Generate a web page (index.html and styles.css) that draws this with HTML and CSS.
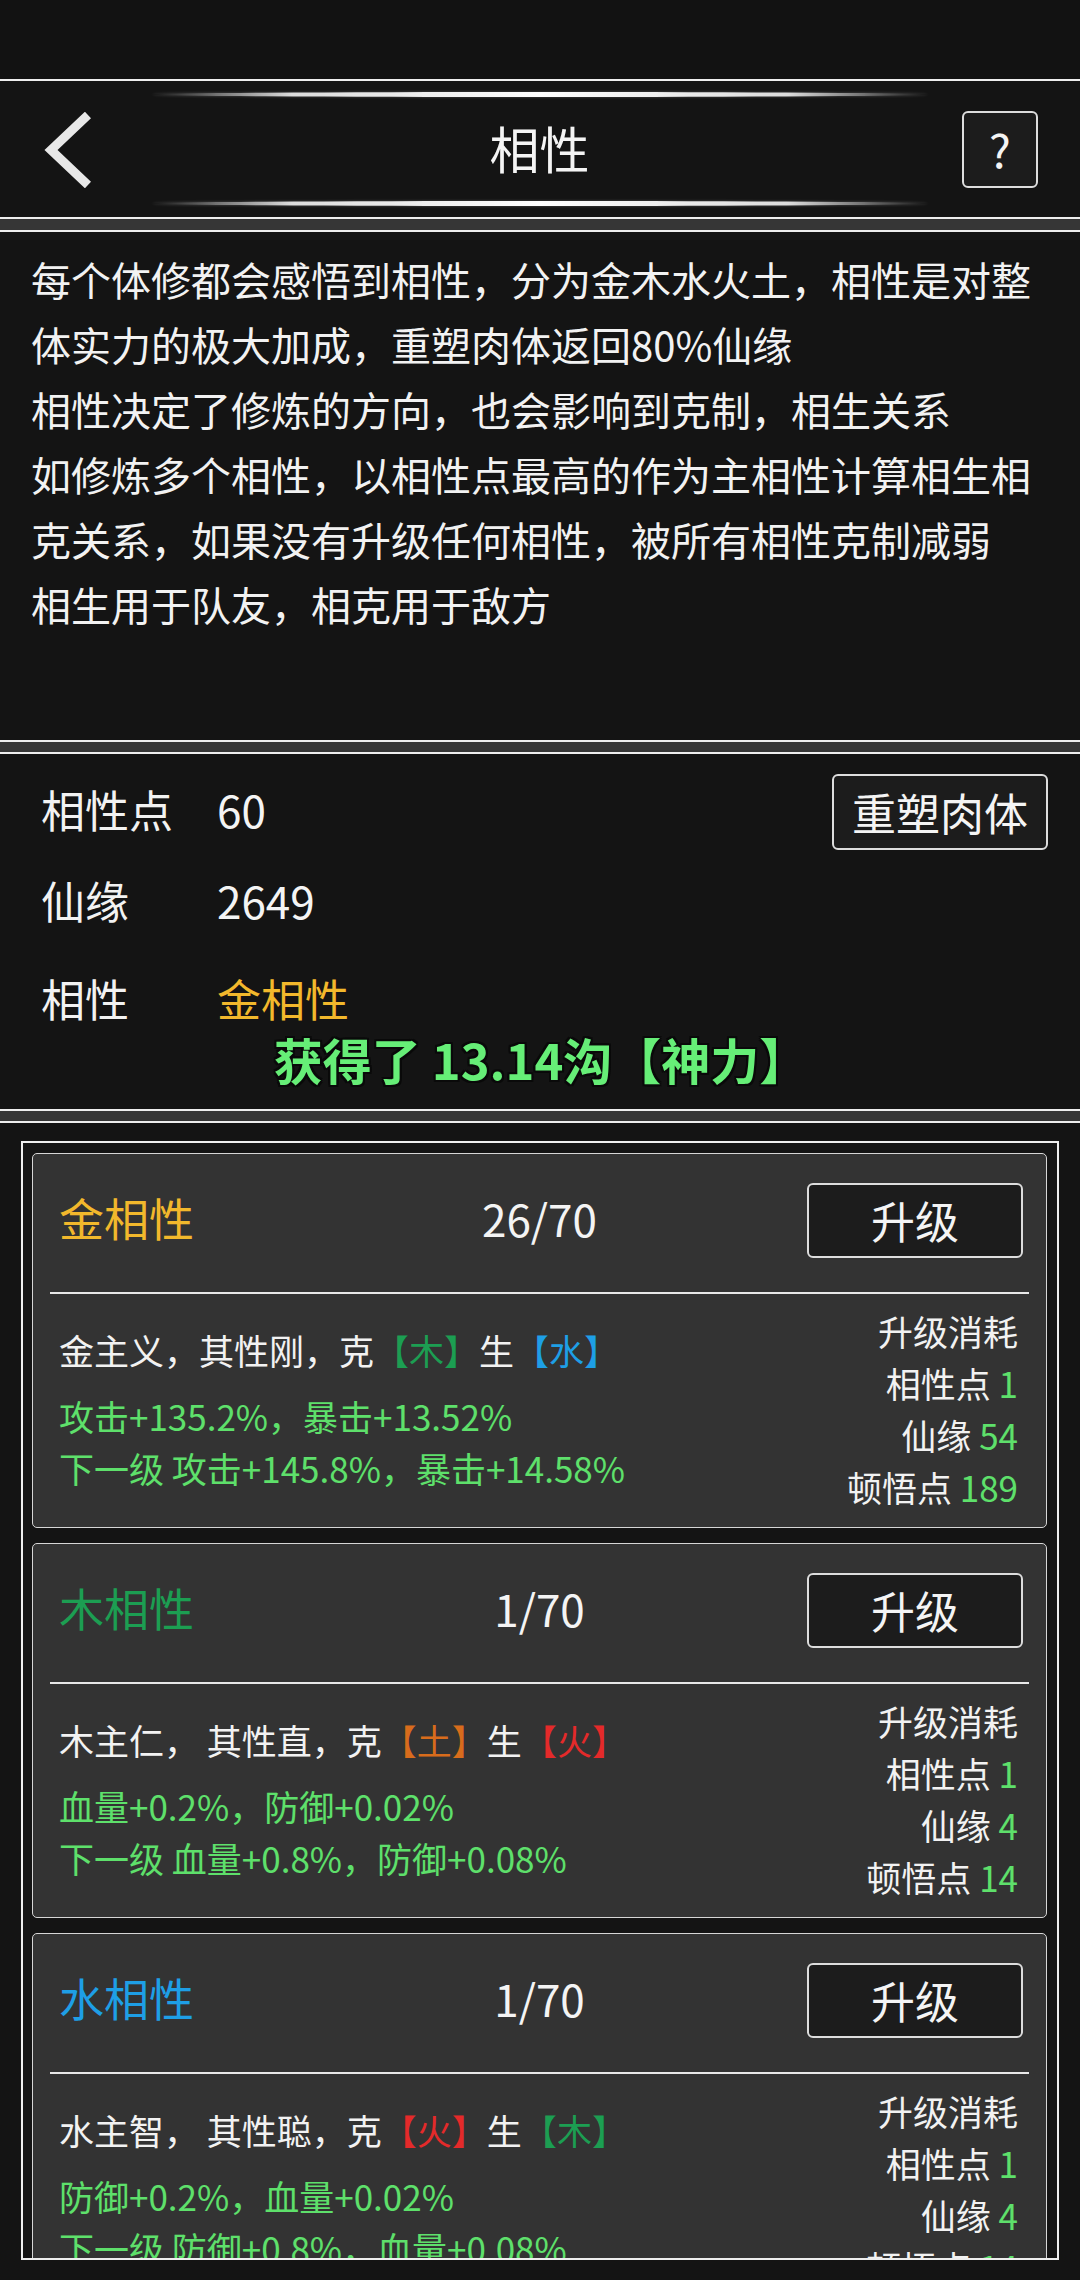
FILE: index.html
```html
<!DOCTYPE html>
<html lang="zh-CN">
<head>
<meta charset="utf-8">
<title>相性</title>
<link rel="stylesheet" href="styles.css">
</head>
<body>
<div class="status"></div>

<header class="topbar">
  <div class="glow"></div>
  <div class="bar-row">
    <svg class="back" width="50" height="76" viewBox="0 0 50 76">
      <polyline points="47,3 10,38 47,73" fill="none" stroke="#e8e8e8" stroke-width="9" stroke-linejoin="miter"/>
    </svg>
    <div class="title">相性</div>
    <div class="help">?</div>
  </div>
  <div class="glow"></div>
</header>

<div class="gap first-gap"></div>

<section class="panel desc">
  <p>每个体修都会感悟到相性，分为金木水火土，相性是对整体实力的极大加成，重塑肉体返回80%仙缘</p>
  <p>相性决定了修炼的方向，也会影响到克制，相生关系</p>
  <p>如修炼多个相性，以相性点最高的作为主相性计算相生相克关系，如果没有升级任何相性，被所有相性克制减弱</p>
  <p>相生用于队友，相克用于敌方</p>
</section>

<div class="gap"></div>

<section class="panel stats">
  <div class="stat-row first">
    <span class="label">相性点</span>
    <span class="value">60</span>
    <button class="btn reset">重塑肉体</button>
  </div>
  <div class="stat-row second">
    <span class="label">仙缘</span>
    <span class="value">2649</span>
  </div>
  <div class="stat-row third">
    <span class="label">相性</span>
    <span class="value gold">金相性</span>
  </div>
  <div class="toast">获得了 13.14沟【神力】</div>
</section>

<div class="gap"></div>

<section class="panel list">
  <div class="frame">
    <div class="card">
      <div class="card-head">
        <span class="card-title gold">金相性</span>
        <span class="progress">26/70</span>
        <button class="btn up">升级</button>
      </div>
      <div class="divider"></div>
      <div class="card-body">
        <div class="info">
          <div class="line main">金主义，其性刚，克<span class="wood">【木】</span>生<span class="water">【水】</span></div>
          <div class="line green">攻击+135.2%，暴击+13.52%</div>
          <div class="line green">下一级 攻击+145.8%，暴击+14.58%</div>
        </div>
        <div class="cost">
          <div class="line">升级消耗</div>
          <div class="line">相性点 <span class="green">1</span></div>
          <div class="line">仙缘 <span class="green">54</span></div>
          <div class="line">顿悟点 <span class="green">189</span></div>
        </div>
      </div>
    </div>

    <div class="card">
      <div class="card-head">
        <span class="card-title wood">木相性</span>
        <span class="progress">1/70</span>
        <button class="btn up">升级</button>
      </div>
      <div class="divider"></div>
      <div class="card-body">
        <div class="info">
          <div class="line main">木主仁， 其性直，克<span class="earth">【土】</span>生<span class="fire">【火】</span></div>
          <div class="line green">血量+0.2%，防御+0.02%</div>
          <div class="line green">下一级 血量+0.8%，防御+0.08%</div>
        </div>
        <div class="cost">
          <div class="line">升级消耗</div>
          <div class="line">相性点 <span class="green">1</span></div>
          <div class="line">仙缘 <span class="green">4</span></div>
          <div class="line">顿悟点 <span class="green">14</span></div>
        </div>
      </div>
    </div>

    <div class="card">
      <div class="card-head">
        <span class="card-title water">水相性</span>
        <span class="progress">1/70</span>
        <button class="btn up">升级</button>
      </div>
      <div class="divider"></div>
      <div class="card-body">
        <div class="info">
          <div class="line main">水主智， 其性聪，克<span class="fire">【火】</span>生<span class="wood">【木】</span></div>
          <div class="line green">防御+0.2%，血量+0.02%</div>
          <div class="line green">下一级 防御+0.8%，血量+0.08%</div>
        </div>
        <div class="cost">
          <div class="line">升级消耗</div>
          <div class="line">相性点 <span class="green">1</span></div>
          <div class="line">仙缘 <span class="green">4</span></div>
          <div class="line">顿悟点 <span class="green">14</span></div>
        </div>
      </div>
    </div>
  </div>
</section>
</body>
</html>
```

FILE: styles.css
```css
* { box-sizing: border-box; }
html, body {
  margin: 0;
  padding: 0;
  width: 1080px;
  height: 2280px;
  overflow: hidden;
  background: #121212;
  color: #f2f2f2;
  font-family: "Noto Sans CJK SC", "Noto Sans", sans-serif;
}
p { margin: 0; }

.status { height: 79px; background: #121212; }

.topbar {
  height: 140px;
  background: #141414;
  border-top: 2px solid #eeeeee;
  border-bottom: 2px solid #eeeeee;
  padding: 11px 0;
}
.glow {
  height: 5px;
  margin: 0 152px;
  border-radius: 50%;
  background: linear-gradient(90deg,
    rgba(255,255,255,0) 0%,
    rgba(255,255,255,0.25) 5%,
    rgba(255,255,255,0.85) 18%,
    #ffffff 50%,
    rgba(255,255,255,0.85) 82%,
    rgba(255,255,255,0.25) 95%,
    rgba(255,255,255,0) 100%);
  box-shadow: 0 0 3px rgba(255,255,255,0.25);
}
.bar-row {
  height: 93px;
  margin: 6px 0 5px;
  display: grid;
  grid-template-columns: 1fr auto 1fr;
  align-items: center;
  padding: 0 42px 0 41px;
}
.back { display: block; justify-self: start; }
.title {
  font-size: 50px;
  line-height: 60px;
  padding-bottom: 6px;
  color: #f4f4f4;
}
.help {
  justify-self: end;
  width: 76px;
  height: 77px;
  border: 2px solid #dddddd;
  border-radius: 6px;
  background: #1c1c1c;
  font-size: 46px;
  line-height: 70px;
  text-align: center;
  color: #f4f4f4;
}

.gap { height: 10px; background: #363636; }
.gap.first-gap { height: 11px; }

.panel {
  background: #141414;
  border-top: 2px solid #eeeeee;
  border-bottom: 2px solid #eeeeee;
}

.desc {
  height: 512px;
  padding: 15px 29px 0 31px;
  font-size: 40px;
  line-height: 65px;
  color: #f2f2f2;
}

.stats {
  height: 359px;
  padding: 20px 32px 0 41px;
}
.stat-row {
  display: flex;
  align-items: center;
  font-size: 44px;
  line-height: 60px;
}
.stat-row.first { height: 76px; }
.stat-row.first .label, .stat-row.first .value { padding-bottom: 6px; }
.stat-row.second { margin-top: 20px; }
.stat-row.third { margin-top: 38px; }
.label { width: 176px; }
.value { color: #f4f4f4; }

.btn {
  font-family: "Noto Sans CJK SC", "Noto Sans", sans-serif;
  background: #1c1c1c;
  color: #f4f4f4;
  border: 2px solid #dddddd;
  border-radius: 6px;
  padding: 0;
  cursor: pointer;
}
.reset {
  margin-left: auto;
  width: 216px;
  height: 76px;
  font-size: 44px;
  line-height: 68px;
}

.toast {
  margin: 1px -32px 0 -41px;
  padding-left: 2px;
  text-align: center;
  font-size: 49px;
  line-height: 60px;
  font-weight: 700;
  color: #66ee77;
  text-shadow:
    2px 0 0 #0a0a0a, -2px 0 0 #0a0a0a, 0 2px 0 #0a0a0a, 0 -2px 0 #0a0a0a,
    2px 2px 0 #0a0a0a, -2px 2px 0 #0a0a0a, 2px -2px 0 #0a0a0a, -2px -2px 0 #0a0a0a;
}

.list {
  height: 1159px;
  border-bottom: none;
  padding-top: 18px;
}
.frame {
  margin: 0 21px;
  height: 1119px;
  border: 2px solid #eeeeee;
  padding: 10px 10px 0 9px;
  overflow: hidden;
  display: flex;
  flex-direction: column;
  gap: 15px;
}
.card {
  flex: none;
  height: 375px;
  background: #333333;
  border: 1px solid #d6d6d6;
  border-radius: 5px;
}
.card-head {
  display: grid;
  grid-template-columns: 1fr auto 1fr;
  align-items: center;
  padding: 29px 23px 0;
}
.card-title {
  margin-left: 3px;
  font-size: 45px;
  line-height: 60px;
  padding-bottom: 6px;
}
.progress {
  font-size: 44px;
  line-height: 60px;
  padding-bottom: 6px;
  color: #f4f4f4;
}
.up {
  justify-self: end;
  width: 216px;
  height: 75px;
  font-size: 44px;
  line-height: 67px;
}
.divider {
  margin: 34px 17px 0;
  height: 2px;
  background: #e8e8e8;
}
.card-body {
  display: flex;
  justify-content: space-between;
  align-items: flex-start;
  padding: 0 28px 0 26px;
}
.info { margin-top: 30px; }
.info .line {
  font-size: 35px;
  line-height: 52px;
  white-space: pre;
}
.info .main { margin-bottom: 14px; color: #f2f2f2; }
.cost {
  margin-top: 11px;
  text-align: right;
}
.cost .line {
  font-size: 35px;
  line-height: 52px;
  color: #f2f2f2;
  white-space: nowrap;
}

.green { color: #5ee06b; }
.gold { color: #f2b82c; }
.wood { color: #1c9e52; }
.water { color: #1e9fe6; }
.fire { color: #e42a2a; }
.earth { color: #d86c1c; }
```
